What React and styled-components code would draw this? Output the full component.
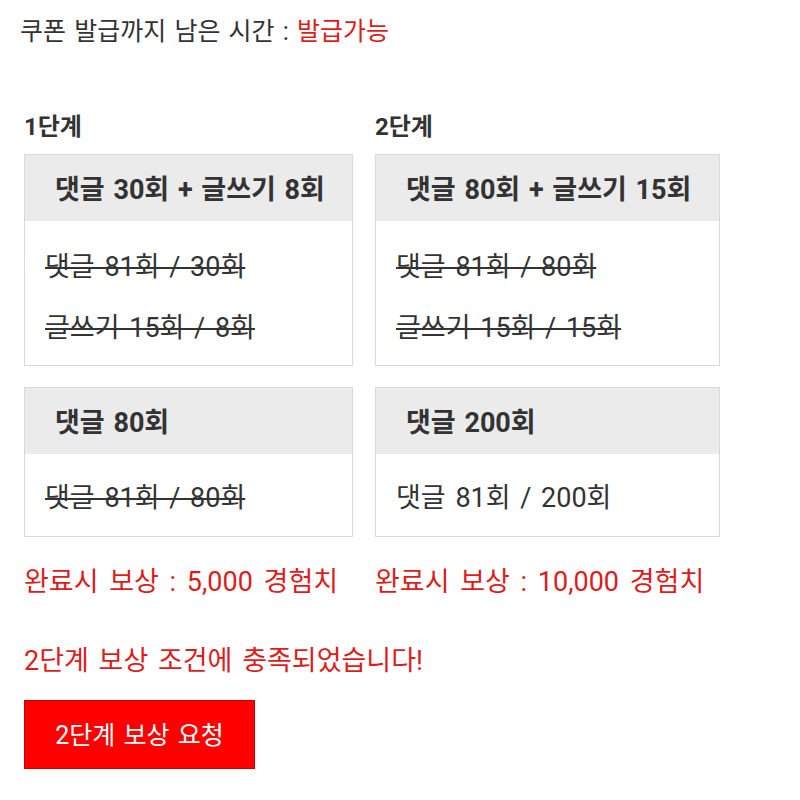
import React from 'react';
import styled, { createGlobalStyle } from 'styled-components';

const GlobalStyle = createGlobalStyle`
  body {
    margin: 0;
    background: #fff;
    font-family: Roboto, "Noto Sans CJK KR", sans-serif;
    color: #333;
  }
`;

const Page = styled.div`
  width: 800px;
  min-height: 800px;
  padding: 14px 0 0 24px;
  box-sizing: border-box;
`;

const Notice = styled.div`
  margin-left: -4px;
  font-size: 25px;
  line-height: 36px;
  word-spacing: 2px;
  color: #333;
  .red {
    color: #dd1c1c;
  }
`;

const Stages = styled.div`
  display: grid;
  grid-template-columns: 329px 345px;
  column-gap: 22px;
  margin-top: 63px;
`;

const Column = styled.div`
  display: flex;
  flex-direction: column;
`;

const StageLabel = styled.div`
  font-size: 24px;
  font-weight: bold;
  line-height: 28px;
  margin-bottom: 13px;
`;

const Box = styled.div`
  border: 1px solid #d9d9d9;
  margin-bottom: ${(p) => (p.last ? '0' : '21px')};
`;

const BoxHead = styled.div`
  background: #ebebeb;
  height: 66px;
  box-sizing: border-box;
  padding: 4px 30px 0;
  line-height: 62px;
  font-size: 27px;
  font-weight: bold;
  word-spacing: 2px;
  white-space: nowrap;
`;

const BoxBody = styled.div`
  padding: ${(p) => (p.tight ? '26px 20px 20px' : '28px 20px 19px')};
  display: flex;
  flex-direction: column;
  gap: 25px;
`;

const Line = styled.div`
  font-size: 27px;
  line-height: 36px;
  word-spacing: 3px;
  color: #333;
  white-space: nowrap;
  text-decoration: ${(p) => (p.done ? 'line-through' : 'none')};
  text-decoration-thickness: 2px;
`;

const Reward = styled.div`
  margin-top: 27px;
  font-size: 27px;
  line-height: 36px;
  word-spacing: 4px;
  color: #dd1c1c;
  white-space: nowrap;
`;

const Complete = styled.div`
  margin-top: 43px;
  font-size: 27px;
  line-height: 36px;
  word-spacing: 3px;
  color: #dd1c1c;
`;

const RequestButton = styled.button`
  margin-top: 21px;
  width: 231px;
  height: 69px;
  background: #ff0000;
  border: 1px solid #c80000;
  color: #fff;
  font-family: inherit;
  font-size: 25px;
  word-spacing: 2px;
  cursor: pointer;
  padding: 0 0 3px;
`;

const stages = [
  {
    label: '1단계',
    main: {
      title: '댓글 30회 + 글쓰기 8회',
      lines: [
        { text: '댓글 81회 / 30회', done: true },
        { text: '글쓰기 15회 / 8회', done: true },
      ],
    },
    extra: {
      title: '댓글 80회',
      lines: [{ text: '댓글 81회 / 80회', done: true }],
    },
    reward: '완료시 보상 : 5,000 경험치',
  },
  {
    label: '2단계',
    main: {
      title: '댓글 80회 + 글쓰기 15회',
      lines: [
        { text: '댓글 81회 / 80회', done: true },
        { text: '글쓰기 15회 / 15회', done: true },
      ],
    },
    extra: {
      title: '댓글 200회',
      lines: [{ text: '댓글 81회 / 200회', done: false }],
    },
    reward: '완료시 보상 : 10,000 경험치',
  },
];

const App = () => (
  <>
    <GlobalStyle />
    <Page>
      <Notice>
        쿠폰 발급까지 남은 시간 : <span className="red">발급가능</span>
      </Notice>
      <Stages>
        {stages.map((s) => (
          <Column key={s.label}>
            <StageLabel>{s.label}</StageLabel>
            <Box>
              <BoxHead>{s.main.title}</BoxHead>
              <BoxBody>
                {s.main.lines.map((l) => (
                  <Line key={l.text} done={l.done}>
                    {l.text}
                  </Line>
                ))}
              </BoxBody>
            </Box>
            <Box last>
              <BoxHead>{s.extra.title}</BoxHead>
              <BoxBody tight>
                {s.extra.lines.map((l) => (
                  <Line key={l.text} done={l.done}>
                    {l.text}
                  </Line>
                ))}
              </BoxBody>
            </Box>
            <Reward>{s.reward}</Reward>
          </Column>
        ))}
      </Stages>
      <Complete>2단계 보상 조건에 충족되었습니다!</Complete>
      <RequestButton>2단계 보상 요청</RequestButton>
    </Page>
  </>
);

export default App;
